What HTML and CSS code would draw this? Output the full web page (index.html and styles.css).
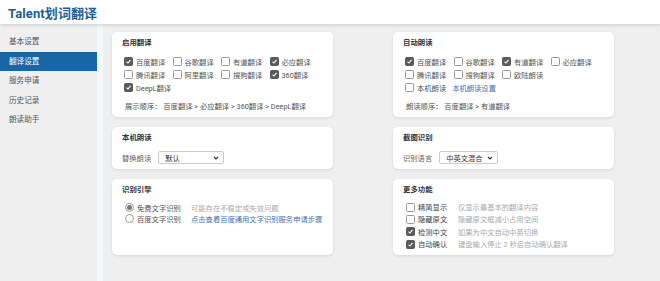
FILE: index.html
```html
<!DOCTYPE html>
<html lang="zh-CN">
<head>
    <meta charset="UTF-8">
    <title>Talent划词翻译 - 翻译设置</title>
    <link rel="stylesheet" href="styles.css">
</head>
<body>
    <header class="header">
        <span class="logo">Talent划词翻译</span>
    </header>

    <div class="layout">
        <nav class="sidebar">
            <a class="nav-item">基本设置</a>
            <a class="nav-item active">翻译设置</a>
            <a class="nav-item">服务申请</a>
            <a class="nav-item">历史记录</a>
            <a class="nav-item">朗读助手</a>
        </nav>

        <main class="content">
            <div class="card-grid">
                <!-- 启用翻译 -->
                <section class="card">
                    <h3>启用翻译</h3>
                    <div class="check-grid">
                        <label class="check-item"><span class="box on"><svg viewBox="0 0 10 10"><path d="M2.2 5.2 4.2 7.2 7.9 2.8"/></svg></span>百度翻译</label>
                        <label class="check-item"><span class="box"></span>谷歌翻译</label>
                        <label class="check-item"><span class="box"></span>有道翻译</label>
                        <label class="check-item"><span class="box on"><svg viewBox="0 0 10 10"><path d="M2.2 5.2 4.2 7.2 7.9 2.8"/></svg></span>必应翻译</label>
                        <label class="check-item"><span class="box"></span>腾讯翻译</label>
                        <label class="check-item"><span class="box"></span>阿里翻译</label>
                        <label class="check-item"><span class="box"></span>搜狗翻译</label>
                        <label class="check-item"><span class="box on"><svg viewBox="0 0 10 10"><path d="M2.2 5.2 4.2 7.2 7.9 2.8"/></svg></span>360翻译</label>
                        <label class="check-item"><span class="box on"><svg viewBox="0 0 10 10"><path d="M2.2 5.2 4.2 7.2 7.9 2.8"/></svg></span>DeepL翻译</label>
                    </div>
                    <p class="order">展示顺序：&nbsp;百度翻译 &gt; 必应翻译 &gt; 360翻译 &gt; DeepL翻译</p>
                </section>

                <!-- 自动朗读 -->
                <section class="card">
                    <h3>自动朗读</h3>
                    <div class="check-grid">
                        <label class="check-item"><span class="box on"><svg viewBox="0 0 10 10"><path d="M2.2 5.2 4.2 7.2 7.9 2.8"/></svg></span>百度翻译</label>
                        <label class="check-item"><span class="box"></span>谷歌翻译</label>
                        <label class="check-item"><span class="box on"><svg viewBox="0 0 10 10"><path d="M2.2 5.2 4.2 7.2 7.9 2.8"/></svg></span>有道翻译</label>
                        <label class="check-item"><span class="box"></span>必应翻译</label>
                        <label class="check-item"><span class="box"></span>腾讯翻译</label>
                        <label class="check-item"><span class="box"></span>搜狗翻译</label>
                        <label class="check-item"><span class="box"></span>欧陆朗读</label>
                        <label class="check-item wide"><span class="box"></span>本机朗读<a class="link">本机朗读设置</a></label>
                    </div>
                    <p class="order">朗读顺序：&nbsp;百度翻译 &gt; 有道翻译</p>
                </section>

                <!-- 本机朗读 -->
                <section class="card">
                    <h3>本机朗读</h3>
                    <div class="field">
                        <span class="field-label">替换朗读</span>
                        <span class="select select-voice">默认<svg viewBox="0 0 10 10"><path d="M2.5 3.8 5 6.2 7.5 3.8"/></svg></span>
                    </div>
                </section>

                <!-- 截图识别 -->
                <section class="card">
                    <h3>截图识别</h3>
                    <div class="field">
                        <span class="field-label">识别语言</span>
                        <span class="select">中英文混合<svg viewBox="0 0 10 10"><path d="M2.5 3.8 5 6.2 7.5 3.8"/></svg></span>
                    </div>
                </section>

                <!-- 识别引擎 -->
                <section class="card">
                    <h3>识别引擎</h3>
                    <div class="option-list">
                        <label class="option"><span class="radio on"></span><span class="option-name">免费文字识别</span><span class="hint">可能存在不稳定或失效问题</span></label>
                        <label class="option"><span class="radio"></span><span class="option-name">百度文字识别</span><a class="link">点击查看百度通用文字识别服务申请步骤</a></label>
                    </div>
                </section>

                <!-- 更多功能 -->
                <section class="card">
                    <h3>更多功能</h3>
                    <div class="option-list more">
                        <label class="option"><span class="box"></span><span class="option-name">精简显示</span><span class="hint">仅显示最基本的翻译内容</span></label>
                        <label class="option"><span class="box"></span><span class="option-name">隐藏原文</span><span class="hint">隐藏原文框减小占用空间</span></label>
                        <label class="option"><span class="box on"><svg viewBox="0 0 10 10"><path d="M2.2 5.2 4.2 7.2 7.9 2.8"/></svg></span><span class="option-name">检测中文</span><span class="hint">如果为中文自动中英切换</span></label>
                        <label class="option"><span class="box on"><svg viewBox="0 0 10 10"><path d="M2.2 5.2 4.2 7.2 7.9 2.8"/></svg></span><span class="option-name">自动确认</span><span class="hint">键盘输入停止 2 秒后自动确认翻译</span></label>
                    </div>
                </section>
            </div>
        </main>
    </div>
</body>
</html>
```

FILE: styles.css
```css
* {
    margin: 0;
    padding: 0;
    box-sizing: border-box;
}

body {
    font-family: 'Roboto', 'Noto Sans CJK SC', sans-serif;
    font-size: 7.3px;
    color: #444;
    background: #efefef;
    height: 100vh;
    display: flex;
    flex-direction: column;
    overflow: hidden;
}

/* Header */
.header {
    height: 24px;
    background: #ffffff;
    padding: 0 8px;
    display: flex;
    align-items: center;
    box-shadow: 0 1px 4px rgba(0,0,0,0.15);
    position: relative;
    z-index: 10;
}

.logo {
    font-size: 13px;
    font-weight: bold;
    color: #1d5d96;
    letter-spacing: 0.1px;
}

/* Layout */
.layout {
    flex: 1;
    display: flex;
}

.sidebar {
    width: 103px;
    background: #efefef;
    border-right: 6px solid #f4f7fb;
    padding-top: 8px;
    display: flex;
    flex-direction: column;
}

.nav-item {
    height: 19.6px;
    line-height: 19.6px;
    padding-left: 9px;
    font-size: 7.6px;
    color: #555;
    cursor: pointer;
}

.nav-item.active {
    background: #1766a8;
    color: #ffffff;
}

.content {
    flex: 1;
    padding: 8px 9px;
}

.card-grid {
    display: grid;
    grid-template-columns: 221px 221px;
    column-gap: 60px;
    row-gap: 10px;
}

.card {
    background: #ffffff;
    border-radius: 5px;
    box-shadow: 0 1px 3px rgba(0,0,0,0.1);
    padding: 5px 10px 5px;
}

.card h3 {
    font-size: 7.4px;
    font-weight: bold;
    color: #333;
    line-height: 11px;
    margin-bottom: 7px;
}

/* Checkboxes */
.check-grid {
    display: grid;
    grid-template-columns: repeat(4, 48.5px);
    grid-auto-rows: 13px;
    padding-left: 2px;
}

.check-item {
    display: flex;
    align-items: center;
    gap: 3px;
    white-space: nowrap;
    color: #555;
}

.check-item.wide {
    grid-column: span 4;
}

.box {
    width: 9px;
    height: 9px;
    border: 1px solid #999;
    border-radius: 1.5px;
    background: #fff;
    flex-shrink: 0;
    display: flex;
}

.box.on {
    background: #5a5a5a;
    border-color: #5a5a5a;
}

.box svg {
    width: 100%;
    height: 100%;
    fill: none;
    stroke: #fff;
    stroke-width: 1.6;
}

.link {
    color: #4a6fb0;
    margin-left: 3px;
    cursor: pointer;
}

.order {
    margin-top: 7px;
    line-height: 11px;
    padding-left: 3px;
    color: #555;
}

/* Select fields */
.field {
    display: flex;
    align-items: center;
    gap: 7px;
    margin-top: 8px;
    height: 13px;
}

.field-label {
    color: #666;
}

.select {
    height: 13px;
    border: 1px solid #ccc;
    border-radius: 2px;
    padding: 0 3px 0 6px;
    display: inline-flex;
    align-items: center;
    justify-content: space-between;
    gap: 3px;
    color: #333;
}

.select-voice {
    width: 66px;
}

.select svg {
    width: 8px;
    height: 8px;
    fill: none;
    stroke: #333;
    stroke-width: 1.6;
}

/* Option lists */
.option-list {
    padding-left: 3px;
}

.option {
    display: flex;
    align-items: center;
    height: 11px;
    white-space: nowrap;
}

.option-list.more {
    margin-top: -1px;
}

.option-list.more .option {
    height: 12.3px;
}

.option-name {
    margin-left: 3px;
    width: 54px;
    color: #555;
}

.option-list.more .option-name {
    width: 40px;
    color: #444;
}

.hint {
    color: #aaa;
}

.option .link {
    margin-left: 0;
}

.radio {
    width: 9px;
    height: 9px;
    border: 1px solid #999;
    border-radius: 50%;
    background: #fff;
    flex-shrink: 0;
    display: flex;
    align-items: center;
    justify-content: center;
}

.radio.on::after {
    content: '';
    width: 5px;
    height: 5px;
    border-radius: 50%;
    background: #777;
}
```
